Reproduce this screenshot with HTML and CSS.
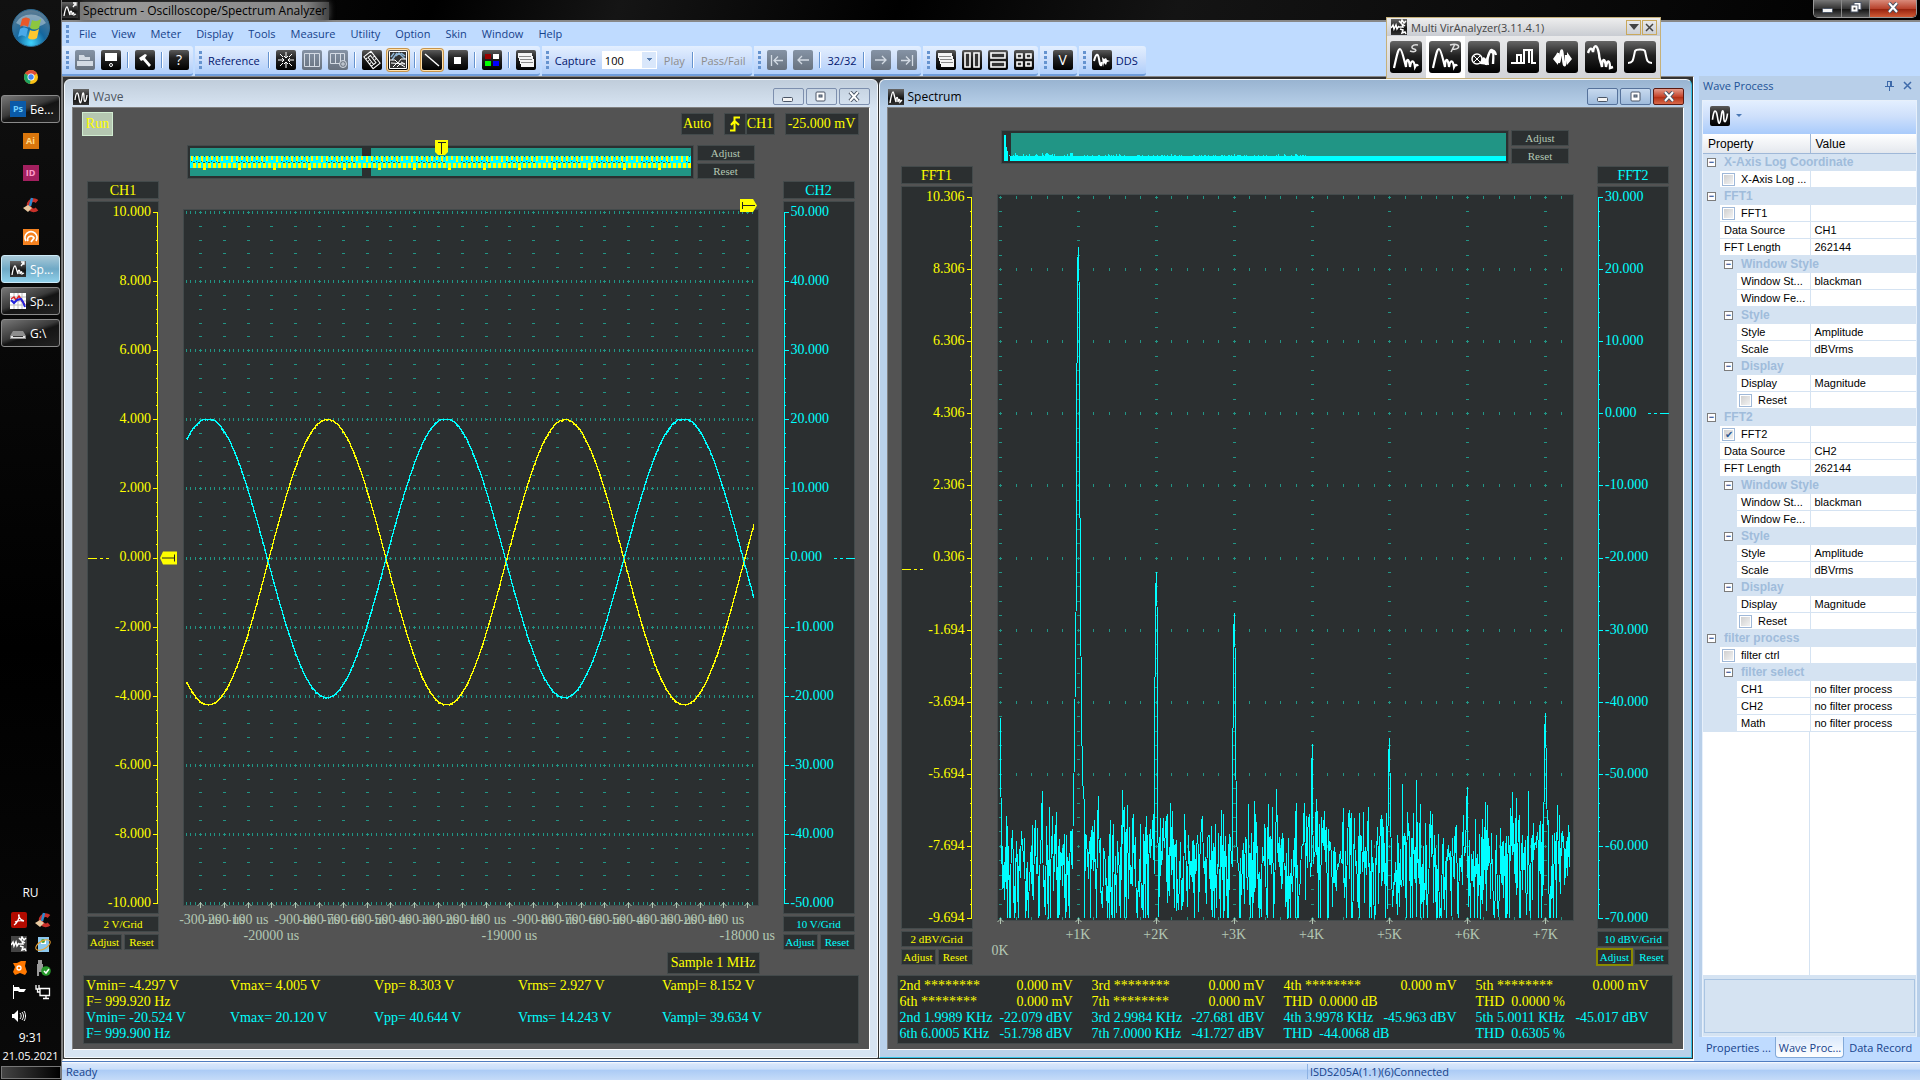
FILE: index.html
```html
<!DOCTYPE html>
<html lang="en">
<head>
    <meta charset="UTF-8">
    <title>Spectrum - Oscilloscope/Spectrum Analyzer</title>
    <link rel="stylesheet" href="styles.css">
</head>
<body>
    <!-- icon set -->
    <svg class="sprite" width="0" height="0">
        <symbol id="i-open" viewBox="0 0 20 20"><path d="M4 5h5l1 2h5v3H4z M2 11h16v5H2z" fill="currentColor"/></symbol>
        <symbol id="i-save" viewBox="0 0 20 20"><path d="M4 3h12v8H4z" fill="#fff"/><circle cx="10" cy="15" r="1.5" fill="none" stroke="#fff"/></symbol>
        <symbol id="i-hammer" viewBox="0 0 20 20"><path d="M4 8l6-4 2 1-2 3 6 7-2 2-6-7-2 1z" fill="#fff"/></symbol>
        <symbol id="i-center" viewBox="0 0 20 20"><path d="M10 2v6M8 6l2 2 2-2M10 18v-6M8 14l2-2 2 2M2 10h6M6 8l2 2-2 2M18 10h-6M14 8l-2 2 2 2M4 4l3 3M16 4l-3 3M4 16l3-3M16 16l-3-3" fill="none" stroke="#fff" stroke-width="1"/></symbol>
        <symbol id="i-cols" viewBox="0 0 20 20"><path d="M2.500 3.500h15v13h-15zM7.500 3.500v13M12.500 3.500v13" fill="none" stroke="currentColor"/></symbol>
        <symbol id="i-colsadd" viewBox="0 0 20 20"><path d="M2.500 3.500h14v10h-14zM7.500 3.500v10M12.500 3.500v10" fill="none" stroke="currentColor"/><circle cx="15" cy="14" r="3.500" fill="#77808c" stroke="currentColor"/><path d="M13 14h4M15 12v4" stroke="currentColor"/></symbol>
        <symbol id="i-ruler" viewBox="0 0 20 20"><g transform="rotate(-38 10 10)" fill="none" stroke="#fff"><path d="M5.500 2.500h9v15h-9zM8.500 5.500h3v9h-3zM5.500 5.500h2M5.500 8.500h2M5.500 11.500h2M5.500 14.500h2M12.500 8.500h2M12.500 11.500h2"/></g></symbol>
        <symbol id="i-image" viewBox="0 0 20 20"><path d="M1.500 1.500h17v17h-17z" fill="#333" stroke="#fff"/><path d="M3 7l3-4M4 10l5-7M8 6l3-3 6 6M13 3l4 3" fill="none" stroke="#8db4d4" stroke-width="1.500"/><path d="M2 10h5l3 3 3-4h5M3 13l14 1M5 17l4-4M9 17l3-3 5 3M13 12l4 2" fill="none" stroke="#fff"/></symbol>
        <symbol id="i-line" viewBox="0 0 20 20"><path d="M3 4l14 12" stroke="#fff" stroke-width="1.400"/></symbol>
        <symbol id="i-square" viewBox="0 0 20 20"><path d="M6 7h7v7H6z" fill="#fff"/></symbol>
        <symbol id="i-colors" viewBox="0 0 20 20"><path d="M3 4h6v5H3z" fill="#900"/><path d="M11 4h6v5h-6z" fill="#fff"/><path d="M3 11h6v5H3z" fill="#0f0"/><path d="M11 11h6v5h-6z" fill="#00f"/></symbol>
        <symbol id="i-stack" viewBox="0 0 20 20"><path d="M2 3h14v3h1v3h1v8H5v-3H4v-3H3V8H2z" fill="#f4f4f4"/><path d="M3 6.500h12M4 9.500h12M5 12.500h12" stroke="#888"/></symbol>
        <symbol id="i-first" viewBox="0 0 20 20"><path d="M4.500 5v11M16 10.500H7M11 6.500l-4 4 4 4" fill="none" stroke="currentColor" stroke-width="1.300"/></symbol>
        <symbol id="i-prev" viewBox="0 0 20 20"><path d="M16 10H5M9 6l-4 4 4 4" fill="none" stroke="currentColor" stroke-width="1.300"/></symbol>
        <symbol id="i-next" viewBox="0 0 20 20"><path d="M4 10h11M11 6l4 4-4 4" fill="none" stroke="currentColor" stroke-width="1.300"/></symbol>
        <symbol id="i-last" viewBox="0 0 20 20"><path d="M15.500 5v11M4 10.500h9M9 6.500l4 4-4 4" fill="none" stroke="currentColor" stroke-width="1.300"/></symbol>
        <symbol id="i-tilev" viewBox="0 0 20 20"><path d="M3 3h5v14H3zM12 3h5v14h-5z" fill="#333" stroke="#fff" stroke-width="1.600"/></symbol>
        <symbol id="i-tileh" viewBox="0 0 20 20"><path d="M3 3h14v5H3zM3 12h14v5H3z" fill="#333" stroke="#fff" stroke-width="1.600"/></symbol>
        <symbol id="i-tile4" viewBox="0 0 20 20"><path d="M3 4h5v4H3zM12 4h5v4h-5zM3 12h5v4H3zM12 12h5v4h-5z" fill="#333" stroke="#fff" stroke-width="1.600"/></symbol>
        <symbol id="i-dds" viewBox="0 0 20 20"><path d="M2 11c2-8 4-8 5-2s2 9 3 3" fill="none" stroke="#fff" stroke-width="2"/><path d="M10 7l2 2 2-1 1 2 3 1-3 1-1 3-2-2-1 4z" fill="#fff"/></symbol>
        <symbol id="i-wave" viewBox="0 0 16 16"><path d="M2 11c1-9 3-9 4-2s2 6 3-1 2-4 2 1 2 5 3-3" fill="none" stroke="#fff" stroke-width="1.300"/></symbol>
        <symbol id="i-spec" viewBox="0 0 16 16"><path d="M2 14c1-6 2-11 3-11s2 8 3 10c0-6 2-6 2 0 1-4 2-3 2 0l2-2" fill="none" stroke="#fff" stroke-width="1.400"/></symbol>
        <symbol id="i-specp" viewBox="0 0 16 16"><path d="M2 14c1-6 2-9 3-9s2 6 3 8c0-5 2-5 2 0 1-3 2-3 2 0l2-1M11 5l3-4M11 1h3v2h-2" fill="none" stroke="#fff" stroke-width="1.300"/></symbol>
        <symbol id="i-multi" viewBox="0 0 16 16"><path d="M0 9l2-3 1 4 2-4 1 4 2-3M8 2l2 2 1-3 2 3 2-2M8 8h4l-1-3 3 2M9 10l3 1-1 3 3-1 1 2" fill="none" stroke="#fff" stroke-width="1.500"/></symbol>
        <symbol id="i-an1" viewBox="0 0 32 32"><path d="M4 27C7 14 8 8 10 8s4 11 6 18c0-9 3-10 4 0 1-8 4-7 5 0 1-2 2-3 3-1" fill="none" stroke="#fff" stroke-width="2.200"/><path d="M28 4c-6-1-8 3-4 4s1 4-4 2" fill="none" stroke="#ddd" stroke-width="1.500"/></symbol>
        <symbol id="i-an2" viewBox="0 0 32 32"><path d="M4 27C7 14 8 8 10 8s4 11 6 18c0-9 3-10 4 0 1-8 4-7 5 0 1-2 2-3 3-1" fill="none" stroke="#fff" stroke-width="2.200"/><path d="M22 11l4-8M21 4c7-2 10 1 8 3s-5 1-6 1" fill="none" stroke="#ddd" stroke-width="1.500"/></symbol>
        <symbol id="i-an3" viewBox="0 0 32 32"><circle cx="9" cy="18" r="5" fill="none" stroke="#fff" stroke-width="1.500"/><path d="M6 15l6 6M12 15l-6 6" stroke="#fff"/><path d="M12 23c2-8 4-8 6-5l2-5 1 11z" fill="#fff"/><path d="M18 24c2-9 4-16 6-15s1 14 1 14M23 12c2-4 4-2 5 2" fill="none" stroke="#fff" stroke-width="2.400"/></symbol>
        <symbol id="i-an4" viewBox="0 0 32 32"><path d="M4 22h6v-8h4v8h3V9h5v13h0M17 22V9M22 9v13M22 9h3v13h4M10 22h5" fill="none" stroke="#fff" stroke-width="2"/></symbol>
        <symbol id="i-an5" viewBox="0 0 32 32"><path d="M12 12c0 8 1 13 2 5s2-12 3 0 3 8 3-3" fill="none" stroke="#fff" stroke-width="2.400"/><path d="M12 11l-5 7 5 6zM21 11l5 7-5 6z" fill="#fff"/></symbol>
        <symbol id="i-an6" viewBox="0 0 32 32"><path d="M3 12c2-6 4-5 5-1 1-7 4-9 6 2 0 5 2 8 3 13 0-9 3-10 4 0 1-8 4-7 4 1l3-1" fill="none" stroke="#fff" stroke-width="2.400"/></symbol>
        <symbol id="i-an7" viewBox="0 0 32 32"><path d="M4 22c5 0 5-2 7-12 1-2 9-2 10 0 2 10 2 12 7 12" fill="none" stroke="#fff" stroke-width="2"/></symbol>
        <symbol id="i-min" viewBox="0 0 14 11"><rect x="1.500" y="6.500" width="10" height="4" rx="1" fill="#f4f4f4" stroke="#4a5566"/></symbol>
        <symbol id="i-max" viewBox="0 0 14 11"><rect x="2" y="1" width="9" height="9" rx="1" fill="#fff" stroke="#4a5566"/><rect x="5" y="4" width="3" height="2" fill="#9ab" stroke="#4a5566"/></symbol>
        <symbol id="i-restore" viewBox="0 0 14 11"><rect x="5" y="0.500" width="7" height="7" fill="#fff" stroke="#4a5566"/><rect x="2" y="3" width="7" height="7" fill="#fff" stroke="#4a5566"/><rect x="4.500" y="5.500" width="2" height="2" fill="#333"/></symbol>
        <symbol id="i-x" viewBox="0 0 14 11"><path d="M3 1l8 9M11 1l-8 9" stroke="#4a5566" stroke-width="4"/><path d="M3 1l8 9M11 1l-8 9" stroke="#fff" stroke-width="2"/></symbol>
    </svg>

    <nav class="taskbar">
        <button class="start" aria-label="Start">
            <svg width="40" height="40" viewBox="0 0 40 40">
                <defs><radialGradient id="orb" cx="50%" cy="90%" r="85%"><stop offset="0" stop-color="#3fd4ff"/><stop offset=".45" stop-color="#14679f"/><stop offset="1" stop-color="#5a7b93"/></radialGradient></defs>
                <circle cx="20" cy="20" r="18.500" fill="url(#orb)" stroke="#2c6a92"/>
                <path d="M5 15a16 13 0 0 1 30 0c-9 6-20 6-30 0z" fill="#fff" opacity=".35"/>
                <path d="M11 11c3-2 5-2 8 0l-2 8c-3-2-5-2-8 0z" fill="#e8582a"/>
                <path d="M21 12c3 2 6 1 9-1l-2 9c-3 2-6 2-9 0z" fill="#8dc63f"/>
                <path d="M9 21c3-2 5-2 8 0l-2 8c-3-2-5-2-8 0z" fill="#4aa9e9"/>
                <path d="M19 22c3 2 6 1 9-1l-2 9c-3 2-6 2-9 0z" fill="#fdc72f"/>
            </svg>
        </button>
        <div class="tasks">
            <button class="pin" aria-label="Chrome"><svg width="16" height="16" viewBox="0 0 16 16"><circle cx="8" cy="8" r="7" fill="#fbc116"/><path d="M8 8L2 4.500A7 7 0 0 1 14 4.500z" fill="#dd4b39"/><path d="M8 8L2 4.500A7 7 0 0 0 7 15z" fill="#1da462"/><circle cx="8" cy="8" r="3.500" fill="#fff"/><circle cx="8" cy="8" r="2.700" fill="#4285f4"/></svg></button>
            <button class="task"><i class="app-ico ps">Ps</i>Бе...</button>
            <button class="pin"><i class="app-ico ai">Ai</i></button>
            <button class="pin"><i class="app-ico indd">ID</i></button>
            <button class="pin" aria-label="Cleaner"><svg width="16" height="16" viewBox="0 0 16 16"><path d="M14 4.500A5 5 0 1 0 14 12" fill="none" stroke="#c8312a" stroke-width="4"/><path d="M9 1L7 9" stroke="#2c8ad0" stroke-width="2.500"/><path d="M0 11l5-3 4 3-4 4z" fill="#e8c9a0"/></svg></button>
            <button class="pin" aria-label="Player"><svg width="16" height="16" viewBox="0 0 16 16"><path d="M0 0h16v16H0z" fill="#f58220"/><path d="M3 12a6 6 0 1 1 10 0M5 12a3 3 0 0 1 6-3l-3 4" fill="none" stroke="#fff" stroke-width="1.800"/></svg></button>
            <button class="task active"><i class="app-ico dark"><svg width="16" height="16"><use href="#i-specp"/></svg></i>Sp...</button>
            <button class="task"><i class="app-ico"><svg width="16" height="16" viewBox="0 0 16 16"><path d="M0 0h16v16H0z" fill="#fff"/><path d="M0 4h16M0 8h16M0 12h16M4 0v16M8 0v16M12 0v16" stroke="#bbb"/><path d="M1 6l3-2 2 3 3-4 3 5 3 4" fill="none" stroke="#d22" stroke-width="1.500"/><path d="M1 7l3 3 3-3 4-1 2 3 2 5" fill="none" stroke="#22d" stroke-width="2"/></svg></i>Sp...</button>
            <button class="task"><i class="app-ico"><svg width="16" height="16" viewBox="0 0 16 16"><path d="M3 6h10l3 5v3H0v-3z" fill="#8d8d8d"/><path d="M1 11h14v2H1z" fill="#ddd"/><path d="M3 11h10v1H3z" fill="#333"/></svg></i>G:\</button>
        </div>
        <div class="tray">
            <span>RU</span>
            <div class="tray-icons">
                <svg width="16" height="16" viewBox="0 0 16 16"><rect width="16" height="16" rx="2" fill="#b30b00"/><path d="M3 13c3-2 6-7 5-10-1-1 0 5 5 6M4 10c2-1 5-2 9-1" fill="none" stroke="#fff" stroke-width="1.300"/></svg>
                <svg width="16" height="16" viewBox="0 0 16 16"><path d="M14 4.500A5 5 0 1 0 14 12" fill="none" stroke="#c8312a" stroke-width="4"/><path d="M9 1L7 9" stroke="#2c8ad0" stroke-width="2.500"/><path d="M0 11l5-3 4 3-4 4z" fill="#e8c9a0"/></svg>
                <svg width="16" height="16" viewBox="0 0 16 16"><path d="M0 0h16v16H0z" fill="#444"/><use href="#i-multi"/></svg>
                <svg width="16" height="16" viewBox="0 0 16 16"><path d="M3 1h11v15H3z" fill="#8cc8ef"/><path d="M6 4h5v4H6z" fill="#fff"/><circle cx="8" cy="5" r="2" fill="#48a63a"/><ellipse cx="8" cy="9" rx="8" ry="4" fill="none" stroke="#f0a22d" transform="rotate(-30 8 9)"/></svg>
                <svg width="16" height="16" viewBox="0 0 16 16"><path d="M2 3l4 0 4-2 5 0-1 5 2 6-2 3-5-2-5 2-2-3 2-5z" fill="#ff7800"/><circle cx="8" cy="8" r="2" fill="none" stroke="#fff" stroke-width="1.300"/></svg>
                <svg width="16" height="16" viewBox="0 0 16 16"><path d="M3 0h4v4h1v8H4v4H2V4h1z" fill="#999"/><circle cx="11" cy="11" r="4.800" fill="#27992b"/><path d="M9 11l2 2 3-4" fill="none" stroke="#fff" stroke-width="1.500"/></svg>
                <svg width="16" height="16" viewBox="0 0 16 16"><path d="M2.500 1v14" stroke="#fff"/><path d="M3 3h5l1 2 6 0-2 3H8L7 7H3z" fill="#fff"/></svg>
                <svg width="16" height="16" viewBox="0 0 16 16"><path d="M5 4.500h9.500v7H5zM8 14.500h6M11 12v2M1 1v4h3V1M2.500 5v3H5" fill="none" stroke="#fff" stroke-width="1.300"/></svg>
                <svg width="16" height="16" viewBox="0 0 16 16"><path d="M1 6h2l4-4v12l-4-4H1z" fill="#fff"/><path d="M9 5c1.500 2 1.500 4 0 6M11 4c2 3 2 5 0 8M13 3c2 3 2 7 0 10" fill="none" stroke="#fff"/></svg>
            </div>
            <span class="clock">9:31</span>
            <span class="date">21.05.2021</span>
        </div>
        <button class="show-desktop" aria-label="Show desktop"></button>
    </nav>

    <div class="app">
        <header class="titlebar">
            <i class="app-ico dark"><svg width="16" height="16"><use href="#i-specp"/></svg></i>
            <span class="title-text">Spectrum - Oscilloscope/Spectrum Analyzer</span>
            <div class="caption">
                <button aria-label="Minimize"><svg width="14" height="11"><use href="#i-min"/></svg></button>
                <button aria-label="Restore"><svg width="14" height="11"><use href="#i-restore"/></svg></button>
                <button class="close" aria-label="Close"><svg width="14" height="11"><use href="#i-x"/></svg></button>
            </div>
        </header>

        <nav class="menubar">
            <span class="grip"></span>
            <a href="#">File</a><a href="#">View</a><a href="#">Meter</a><a href="#">Display</a><a href="#">Tools</a><a href="#">Measure</a><a href="#">Utility</a><a href="#">Option</a><a href="#">Skin</a><a href="#">Window</a><a href="#">Help</a>
        </nav>

        <div class="toolbars">
            <div class="bar">
                <span class="grip"></span>
                <button class="tb off" aria-label="Open"><svg><use href="#i-open"/></svg></button>
                <button class="tb" aria-label="Save"><svg><use href="#i-save"/></svg></button>
                <span class="sep"></span>
                <button class="tb" aria-label="Setup"><svg><use href="#i-hammer"/></svg></button>
                <span class="sep"></span>
                <button class="tb">?</button>
            </div>
            <div class="bar">
                <span class="grip"></span>
                <button class="txt ref">Reference</button>
                <span class="sep"></span>
                <button class="tb" aria-label="Center"><svg><use href="#i-center"/></svg></button>
                <button class="tb off" aria-label="Columns"><svg><use href="#i-cols"/></svg></button>
                <button class="tb off" aria-label="Add column"><svg><use href="#i-colsadd"/></svg></button>
                <span class="sep"></span>
                <button class="tb" aria-label="Ruler"><svg><use href="#i-ruler"/></svg></button>
                <button class="tb checked" aria-label="Persistence"><svg><use href="#i-image"/></svg></button>
                <span class="sep"></span>
                <button class="tb checked" aria-label="Line"><svg><use href="#i-line"/></svg></button>
                <button class="tb" aria-label="Dot"><svg><use href="#i-square"/></svg></button>
                <span class="sep"></span>
                <button class="tb" aria-label="Colors"><svg><use href="#i-colors"/></svg></button>
                <span class="sep"></span>
                <button class="tb" aria-label="Reports"><svg><use href="#i-stack"/></svg></button>
            </div>
            <div class="bar capture-bar">
                <span class="grip"></span>
                <label for="capture">Capture</label>
                <select id="capture"><option>100</option></select>
                <button class="txt" disabled>Play</button>
                <span class="sep"></span>
                <button class="txt" disabled>Pass/Fail</button>
            </div>
            <div class="bar">
                <span class="grip"></span>
                <button class="tb off" aria-label="First"><svg><use href="#i-first"/></svg></button>
                <button class="tb off" aria-label="Previous"><svg><use href="#i-prev"/></svg></button>
                <span class="sep"></span>
                <span class="txt">32/32</span>
                <span class="sep"></span>
                <button class="tb off" aria-label="Next"><svg><use href="#i-next"/></svg></button>
                <button class="tb off" aria-label="Last"><svg><use href="#i-last"/></svg></button>
            </div>
            <div class="bar">
                <span class="grip"></span>
                <button class="tb" aria-label="Cascade"><svg><use href="#i-stack"/></svg></button>
                <button class="tb" aria-label="Tile vertically"><svg><use href="#i-tilev"/></svg></button>
                <button class="tb" aria-label="Tile horizontally"><svg><use href="#i-tileh"/></svg></button>
                <button class="tb" aria-label="Tile"><svg><use href="#i-tile4"/></svg></button>
            </div>
            <div class="bar">
                <span class="grip"></span>
                <button class="tb">V</button>
            </div>
            <div class="bar">
                <span class="grip"></span>
                <button class="tb" aria-label="DDS generator"><svg><use href="#i-dds"/></svg></button>
                <span class="txt dds">DDS</span>
            </div>
        </div>

        <main class="work">
            <div class="mdi">
                <section class="win">
                    <div class="win-title">
                        <i class="app-ico dark"><svg width="16" height="16"><use href="#i-wave"/></svg></i>
                        <span>Wave</span>
                        <div class="win-btns">
                            <button aria-label="Minimize"><svg width="14" height="11"><use href="#i-min"/></svg></button>
                            <button aria-label="Maximize"><svg width="14" height="11"><use href="#i-max"/></svg></button>
                            <button aria-label="Close"><svg width="14" height="11"><use href="#i-x"/></svg></button>
                        </div>
                    </div>
                    <div class="scope">
                        <div class="topline">
                            <button class="run">Run</button>
                            <span class="box push">Auto</span>
                            <span class="box edge"><svg width="12" height="16" viewBox="0 0 12 16"><path d="M1 14.500h4.500V1.500H11M2 9l3.500-4L10 9" fill="none" stroke="#ff0" stroke-width="2"/></svg></span>
                            <span class="box src">CH1</span>
                            <span class="box level">-25.000 mV</span>
                        </div>
                        <div class="overview">
                            <svg id="waveOverview"></svg>
                            <div class="stack"><button class="box">Adjust</button><button class="box">Reset</button></div>
                        </div>
                        <div class="panels">
                            <div class="axis left yellow">
                                <div class="box head">CH1</div>
                                <div class="box scale" data-from="10" data-step="-2"></div>
                                <div class="box unit">2 V/Grid</div>
                                <div class="pair"><button class="box">Adjust</button><button class="box">Reset</button></div>
                            </div>
                            <div class="plot"><svg id="wavePlot"></svg></div>
                            <div class="axis right cyan">
                                <div class="box head">CH2</div>
                                <div class="box scale" data-from="50" data-step="-10"></div>
                                <div class="box unit">10 V/Grid</div>
                                <div class="pair"><button class="box">Adjust</button><button class="box">Reset</button></div>
                            </div>
                        </div>
                        <div class="box sample">Sample 1 MHz</div>
                        <div class="box measures wave-measures">
                            <div class="yellow"><span>Vmin= -4.297 V</span><span>Vmax= 4.005 V</span><span>Vpp= 8.303 V</span><span>Vrms= 2.927 V</span><span>Vampl= 8.152 V</span><span>F= 999.920 Hz</span></div>
                            <div class="cyan"><span>Vmin= -20.524 V</span><span>Vmax= 20.120 V</span><span>Vpp= 40.644 V</span><span>Vrms= 14.243 V</span><span>Vampl= 39.634 V</span><span>F= 999.900 Hz</span></div>
                        </div>
                    </div>
                </section>

                <section class="win front">
                    <div class="win-title">
                        <i class="app-ico dark"><svg width="16" height="16"><use href="#i-spec"/></svg></i>
                        <span>Spectrum</span>
                        <div class="win-btns">
                            <button aria-label="Minimize"><svg width="14" height="11"><use href="#i-min"/></svg></button>
                            <button aria-label="Maximize"><svg width="14" height="11"><use href="#i-max"/></svg></button>
                            <button class="close" aria-label="Close"><svg width="14" height="11"><use href="#i-x"/></svg></button>
                        </div>
                    </div>
                    <div class="scope spectrum">
                        <div class="overview">
                            <svg id="specOverview"></svg>
                            <div class="stack"><button class="box">Adjust</button><button class="box">Reset</button></div>
                        </div>
                        <div class="panels">
                            <div class="axis left yellow">
                                <div class="box head">FFT1</div>
                                <div class="box scale" data-from="10.306" data-step="-2"></div>
                                <div class="box unit">2 dBV/Grid</div>
                                <div class="pair"><button class="box">Adjust</button><button class="box">Reset</button></div>
                            </div>
                            <div class="plot"><svg id="specPlot"></svg></div>
                            <div class="axis right cyan">
                                <div class="box head">FFT2</div>
                                <div class="box scale" data-from="30" data-step="-10"></div>
                                <div class="box unit">10 dBV/Grid</div>
                                <div class="pair"><button class="box focus">Adjust</button><button class="box">Reset</button></div>
                            </div>
                        </div>
                        <div class="box measures spec-measures">
                            <div class="yellow">
                                <span>2nd ********</span><span>0.000 mV</span><span>3rd ********</span><span>0.000 mV</span><span>4th ********</span><span>0.000 mV</span><span>5th ********</span><span>0.000 mV</span>
                                <span>6th ********</span><span>0.000 mV</span><span>7th ********</span><span>0.000 mV</span><span class="thd">THD&nbsp; 0.0000 dB</span><span class="thd">THD&nbsp; 0.0000 %</span>
                            </div>
                            <div class="cyan">
                                <span>2nd 1.9989 KHz</span><span>-22.079 dBV</span><span>3rd 2.9984 KHz</span><span>-27.681 dBV</span><span>4th 3.9978 KHz</span><span>-45.963 dBV</span><span>5th 5.0011 KHz</span><span>-45.017 dBV</span>
                                <span>6th 6.0005 KHz</span><span>-51.798 dBV</span><span>7th 7.0000 KHz</span><span>-41.727 dBV</span><span class="thd">THD&nbsp; -44.0068 dB</span><span class="thd">THD&nbsp; 0.6305 %</span>
                            </div>
                        </div>
                    </div>
                </section>
            </div>

            <aside class="dock">
                <div class="dock-title">
                    <span>Wave Process</span>
                    <button aria-label="Pin"><svg width="9" height="11" viewBox="0 0 9 11"><path d="M2.500 1v5M6.500 1v5M2 1.500h5M5.500 2v4M0 6.500h9M4.500 7v4" fill="none" stroke="#3e6aaa"/></svg></button>
                    <button aria-label="Close"><svg width="9" height="9" viewBox="0 0 9 9"><path d="M1 1l7 7M8 1l-7 7" stroke="#3e6aaa" stroke-width="1.500"/></svg></button>
                </div>
                <div class="dock-body">
                    <div class="dock-tools"><button class="tb" aria-label="Wave"><svg viewBox="0 0 16 16"><use href="#i-wave"/></svg></button><span class="drop"></span></div>
                    <table class="props">
                        <thead><tr><th>Property</th><th>Value</th></tr></thead>
                        <tbody>
                            <tr class="cat"><td colspan="2"><button>−</button>X-Axis Log Coordinate</td></tr>
                            <tr><td><label><input type="checkbox">X-Axis Log ...</label></td><td></td></tr>
                            <tr class="cat"><td colspan="2"><button>−</button>FFT1</td></tr>
                            <tr><td><label><input type="checkbox">FFT1</label></td><td></td></tr>
                            <tr><td>Data Source</td><td>CH1</td></tr>
                            <tr><td>FFT Length</td><td>262144</td></tr>
                            <tr class="cat sub"><td colspan="2"><button>−</button>Window Style</td></tr>
                            <tr class="sub"><td>Window St...</td><td>blackman</td></tr>
                            <tr class="sub"><td>Window Fe...</td><td></td></tr>
                            <tr class="cat sub"><td colspan="2"><button>−</button>Style</td></tr>
                            <tr class="sub"><td>Style</td><td>Amplitude</td></tr>
                            <tr class="sub"><td>Scale</td><td>dBVrms</td></tr>
                            <tr class="cat sub"><td colspan="2"><button>−</button>Display</td></tr>
                            <tr class="sub"><td>Display</td><td>Magnitude</td></tr>
                            <tr class="sub"><td><label><input type="checkbox">Reset</label></td><td></td></tr>
                            <tr class="cat"><td colspan="2"><button>−</button>FFT2</td></tr>
                            <tr><td><label><input type="checkbox" checked>FFT2</label></td><td></td></tr>
                            <tr><td>Data Source</td><td>CH2</td></tr>
                            <tr><td>FFT Length</td><td>262144</td></tr>
                            <tr class="cat sub"><td colspan="2"><button>−</button>Window Style</td></tr>
                            <tr class="sub"><td>Window St...</td><td>blackman</td></tr>
                            <tr class="sub"><td>Window Fe...</td><td></td></tr>
                            <tr class="cat sub"><td colspan="2"><button>−</button>Style</td></tr>
                            <tr class="sub"><td>Style</td><td>Amplitude</td></tr>
                            <tr class="sub"><td>Scale</td><td>dBVrms</td></tr>
                            <tr class="cat sub"><td colspan="2"><button>−</button>Display</td></tr>
                            <tr class="sub"><td>Display</td><td>Magnitude</td></tr>
                            <tr class="sub"><td><label><input type="checkbox">Reset</label></td><td></td></tr>
                            <tr class="cat"><td colspan="2"><button>−</button>filter process</td></tr>
                            <tr><td><label><input type="checkbox">filter ctrl</label></td><td></td></tr>
                            <tr class="cat sub"><td colspan="2"><button>−</button>filter select</td></tr>
                            <tr class="sub"><td>CH1</td><td>no filter process</td></tr>
                            <tr class="sub"><td>CH2</td><td>no filter process</td></tr>
                            <tr class="sub"><td>Math</td><td>no filter process</td></tr>
                        </tbody>
                    </table>
                    <div class="props-fill"></div>
                    <div class="props-help"></div>
                </div>
                <div class="dock-tabs">
                    <button>Properties ...</button>
                    <button class="current">Wave Proc...</button>
                    <button>Data Record</button>
                </div>
            </aside>
        </main>

        <footer class="status">
            <span class="ready">Ready</span>
            <span class="device">ISDS205A(1.1)(6)Connected</span>
        </footer>
    </div>

    <!-- floating launcher -->
    <div class="launcher">
        <div class="launcher-title">
            <i class="app-ico dark"><svg width="16" height="16"><use href="#i-multi"/></svg></i>
            <span>Multi VirAnalyzer(3.11.4.1)</span>
            <button aria-label="Options"><svg width="10" height="6" viewBox="0 0 10 6"><path d="M0 0h10L5 6z" fill="#444"/></svg></button>
            <button aria-label="Close"><svg width="9" height="9" viewBox="0 0 9 9"><path d="M1 1l7 7M8 1l-7 7" stroke="#444" stroke-width="1.500"/></svg></button>
        </div>
        <div class="launcher-icons">
            <button aria-label="Spectrum S"><svg><use href="#i-an1"/></svg></button>
            <button class="on" aria-label="Spectrum P"><svg><use href="#i-an2"/></svg></button>
            <button aria-label="Multimeter"><svg><use href="#i-an3"/></svg></button>
            <button aria-label="Logic"><svg><use href="#i-an4"/></svg></button>
            <button aria-label="Burst"><svg><use href="#i-an5"/></svg></button>
            <button aria-label="Noise"><svg><use href="#i-an6"/></svg></button>
            <button aria-label="Filter"><svg><use href="#i-an7"/></svg></button>
        </div>
    </div>

    <script src="script.js"></script>
</body>
</html>
```

FILE: styles.css
```css
* {
    box-sizing: border-box;
}
body {
    margin: 0;
    height: 100vh;
    display: flex;
    overflow: hidden;
    background-color: #bfdbff;
    font-family: "Open Sans", "Noto Sans", sans-serif;
    font-size: 11px;
    color: #15428b;
}
button {
    font: inherit;
    color: inherit;
    padding: 0;
    margin: 0;
    border: none;
    background: none;
}
.sprite {
    position: absolute;
}

/* taskbar */
.taskbar {
    width: 62px;
    flex: none;
    display: flex;
    flex-direction: column;
    background: linear-gradient(to bottom, #111, #000 60%, #0a0a0a);
    border-right: 1px solid #777;
    color: #fff;
    font-size: 12px;
}
.start {
    height: 40px;
    margin: 8px 0 15px;
}
.tasks {
    display: flex;
    flex-direction: column;
    gap: 4px;
    padding: 0 1px;
}
.pin {
    height: 28px;
    display: flex;
    align-items: center;
    justify-content: center;
}
.task {
    height: 28px;
    display: flex;
    align-items: center;
    gap: 4px;
    padding-left: 8px;
    border: 1px solid #8a8a8a;
    border-radius: 3px;
    background: linear-gradient(160deg, #777 0%, #3a3a3a 45%, #141414 55%, #222 100%);
}
.task.active {
    border-color: #cdeaf8;
    background: linear-gradient(to bottom, #a9c9d8, #6fa9c6 50%, #8fd0ea);
}
.app-ico {
    width: 16px;
    height: 16px;
    flex: none;
    display: flex;
    align-items: center;
    justify-content: center;
    font-style: normal;
    font-weight: bold;
    font-size: 9px;
    line-height: 16px;
}
.dark {
    background: linear-gradient(to bottom, #666, #111 60%, #333);
}
.ps {
    background-color: #0a5aa8;
    color: #6fd0ff;
}
.ai {
    background-color: #d9760c;
    color: #ffd98a;
}
.indd {
    background-color: #a3205f;
    color: #ff9ccc;
}
.tray {
    margin-top: auto;
    display: flex;
    flex-direction: column;
    align-items: center;
    line-height: 16px;
}
.tray-icons {
    display: grid;
    grid-template-columns: 16px 16px;
    gap: 8px;
    padding: 11px 0 6px;
}
.clock {
    padding-bottom: 2px;
}
.date {
    font-size: 11px;
}
.show-desktop {
    height: 13px;
    margin: 2px 0 1px 1px;
    border: 1px solid #777;
    background: linear-gradient(to right, #444, #000);
}

/* main window */
.app {
    flex: 1;
    min-width: 0;
    display: flex;
    flex-direction: column;
}
.titlebar {
    height: 22px;
    flex: none;
    display: flex;
    align-items: flex-start;
    gap: 2px;
    padding-top: 2px;
    background: linear-gradient(110deg, #111, #000 20%, #151515 30%, #000 45%, #141414 60%, #000);
    border-bottom: 2px solid #888;
    color: #000;
}
.title-text {
    line-height: 18px;
    font-size: 12px;
    padding: 0 2px 0 3px;
    background: linear-gradient(to right, #777, #999 15%, #888 90%, #444);
    box-shadow: 0 0 6px #555;
}
.caption {
    display: flex;
    margin: -2px 3px 0 auto;
    border: 1px solid #999;
    border-top: none;
    border-radius: 0 0 5px 5px;
    overflow: hidden;
}
.caption button {
    width: 28px;
    height: 17px;
    background: linear-gradient(to bottom, #777, #333 50%, #111 52%, #555);
    border-right: 1px solid #888;
}
.caption .close {
    width: 46px;
    border-right: none;
    background: linear-gradient(to bottom, #d98a7a, #b8432d 50%, #93200c 52%, #d05a35);
}
.menubar {
    height: 24px;
    flex: none;
    display: flex;
    align-items: center;
    padding: 0 0 1px 4px;
    background-color: #bfdbff;
}
.menubar .grip {
    margin-right: 3px;
}
.menubar a {
    padding: 0 8px 0 7px;
    color: #15428b;
    text-decoration: none;
}
.grip {
    width: 3px;
    height: 18px;
    background: repeating-linear-gradient(to bottom, #6593cf 0 3px, transparent 3px 5px);
}
.toolbars {
    height: 30px;
    flex: none;
    display: flex;
    gap: 2px;
    color: #00156e;
}
.bar {
    display: flex;
    align-items: center;
    gap: 6px;
    padding: 0 4px;
    background: linear-gradient(to bottom, #e3efff, #cfe0fb 45%, #b0cffb);
    border-bottom: 2px solid #6f9ddb;
    border-radius: 0 3px 3px 0;
}
.ref {
    padding-right: 2px;
}
.capture-bar {
    padding-right: 6px;
}
.capture-bar .txt {
    padding: 0 1px;
}
.dds {
    padding-right: 4px;
    margin-left: -2px;
}
.txt:disabled {
    color: #8d8d8d;
}
.sep {
    width: 2px;
    height: 16px;
    background-color: #6593cf;
    border-right: 1px solid #fff;
}
.tb {
    width: 20px;
    height: 20px;
    flex: none;
    border-radius: 2px;
    background: linear-gradient(to bottom, #5a5a5a, #222 40%, #000);
    color: #fff;
    font-size: 14px;
    line-height: 20px;
    text-align: center;
}
.tb svg {
    display: block;
    width: 20px;
    height: 20px;
}
.tb.off {
    background: linear-gradient(to bottom, #8593a5, #68727f);
    color: #d3dae3;
}
.tb.checked {
    box-shadow: 0 0 0 1px #ffe1ad, 0 0 0 2px #c8954a;
}
#capture {
    width: 55px;
    height: 18px;
    border: none;
    padding: 0 3px;
    appearance: none;
    font: inherit;
    color: #000;
    background-color: #fff;
    background-image: linear-gradient(#5a7fb0, #5a7fb0), linear-gradient(#5a7fb0, #5a7fb0), linear-gradient(#5a7fb0, #5a7fb0), linear-gradient(#d9e7fb, #d9e7fb);
    background-size: 5px 1px, 3px 1px, 1px 1px, 14px 16px;
    background-position: right 5px top 7px, right 6px top 8px, right 7px top 9px, right 1px top 1px;
    background-repeat: no-repeat;
}

/* mdi area */
.work {
    flex: 1;
    min-height: 0;
    display: flex;
    gap: 5px;
    background-color: #bfdbff;
}
.mdi {
    flex: 1;
    min-width: 0;
    display: grid;
    grid-template-columns: 1fr 1fr;
    gap: 1px;
    padding: 2px 1px 1px;
    background-color: #333;
    border: 1px solid #888;
    border-right-color: #fff;
    border-bottom: 2px solid #fff;
}
.win {
    min-width: 0;
    min-height: 0;
    display: flex;
    flex-direction: column;
    padding: 0 7px 7px;
    border: 1px solid #f4f8fc;
    border-radius: 6px 6px 0 0;
    background: linear-gradient(to bottom, #c0cddb, #d7e4f2 28px);
    color: #4d5560;
    font-size: 12px;
}
.win.front {
    background: linear-gradient(to bottom, #99b4d1, #b9d1ea 28px);
    border-right-color: #33c4e8;
    border-bottom-color: #33c4e8;
    color: #000;
}
.win-title {
    height: 27px;
    flex: none;
    display: flex;
    align-items: center;
    gap: 4px;
    padding-top: 6px;
    padding-left: 1px;
}
.win-btns {
    display: flex;
    gap: 2px;
    margin-left: auto;
}
.win-btns button {
    width: 31px;
    height: 17px;
    display: flex;
    align-items: center;
    justify-content: center;
    border: 1px solid #7d8fae;
    border-radius: 2px;
}
.front .win-btns button {
    background: linear-gradient(to bottom, #c7d9ee, #9fbbdc);
    border-color: #56729b;
}
.front .win-btns .close {
    background: linear-gradient(to bottom, #e49b8b, #c5442c 50%, #b02c12 52%, #d9694a);
    border-color: #5b1a12;
}
.scope {
    flex: 1;
    min-height: 0;
    display: flex;
    flex-direction: column;
    padding: 4px 10px 5px;
    border: 1px solid;
    border-color: #808080 #fff #fff #808080;
    background-color: #535353;
    font-family: "Liberation Serif", serif;
    font-size: 14px;
    line-height: 16px;
}
.scope.spectrum {
    padding: 22px 10px 5px 9px;
}
.yellow {
    color: #ff0;
}
.cyan {
    color: #0ff;
}
.box {
    border: 1px solid #434a4b;
    background-color: #2b2f30;
    white-space: nowrap;
}
.topline {
    height: 24px;
    flex: none;
    display: flex;
    align-items: center;
    color: #ff0;
}
.topline .box {
    height: 22px;
    line-height: 20px;
    text-align: center;
}
.run {
    width: 31px;
    height: 24px;
    margin-left: -1px;
    border: 1px solid #d0ecd0;
    background-color: #b5c7b1;
}
.push {
    width: 33px;
    margin: 0 10px 0 auto;
}
.edge {
    width: 22px;
    display: flex;
    align-items: center;
    justify-content: center;
}
.src {
    width: 29px;
}
.level {
    width: 74px;
    margin-left: 10px;
}
.overview {
    height: 34px;
    flex: none;
    display: flex;
    gap: 3px;
    margin: 9px 104px 2px;
}
.spectrum .overview {
    margin-top: 0;
}
.overview svg {
    flex: 1;
    min-width: 0;
    height: 34px;
    overflow: visible;
}
.stack {
    width: 58px;
    display: flex;
    flex-direction: column;
    gap: 2px;
    color: #b4c8b4;
}
.stack .box,
.pair .box,
.unit {
    height: 16px;
    font-size: 11px;
    line-height: 14px;
    text-align: center;
}
.panels {
    flex: 1;
    min-height: 0;
    display: grid;
    grid-template-columns: 72px 1fr 72px;
    gap: 24px;
    padding: 0 4px;
}
.axis {
    min-height: 0;
    display: flex;
    flex-direction: column;
    gap: 2px;
}
.head {
    height: 18px;
    line-height: 18px;
    text-align: center;
}
.scale {
    position: relative;
    flex: 1;
    min-height: 0;
    display: flex;
    flex-direction: column;
    justify-content: space-between;
    padding: 2px 7px;
}
.left .scale {
    text-align: right;
}
.scale svg {
    position: absolute;
    top: -1px;
    left: -1px;
}
.pair {
    display: grid;
    grid-template-columns: 1fr 1fr;
    gap: 2px;
}
.focus {
    border-color: #8a8a00;
    outline: 1px solid #8a8a00;
}
.plot {
    position: relative;
    min-width: 0;
}
.plot svg {
    position: absolute;
    top: 0;
    left: 0;
    overflow: visible;
}
.plot text {
    fill: #b4c8b4;
    text-anchor: middle;
}
.sample {
    align-self: flex-end;
    height: 22px;
    line-height: 20px;
    padding: 0 3px;
    margin: 2px 99px 1px 0;
    color: #ff0;
}
.measures {
    height: 69px;
    flex: none;
    padding: 2px;
}
.spectrum .measures {
    margin-top: 10px;
}
.measures > div {
    display: grid;
}
.wave-measures > div {
    grid-template-columns: repeat(5, 144px);
}
.spec-measures > div {
    grid-template-columns: repeat(4, 94px 98px);
}
.spec-measures span:nth-child(even) {
    text-align: right;
    padding-right: 19px;
}
.spec-measures .thd,
.spec-measures .thd:nth-child(even) {
    grid-column: span 2;
    text-align: left;
    padding-right: 0;
}

/* docked property pane */
.dock {
    width: 221px;
    flex: none;
    display: flex;
    flex-direction: column;
    background-color: #b8cfe9;
}
.dock-title {
    height: 19px;
    flex: none;
    display: flex;
    align-items: center;
    gap: 9px;
    padding: 0 8px 0 4px;
    color: #1e5397;
}
.dock-title span {
    flex: 1;
}
.dock-title svg {
    display: block;
}
.dock-body {
    flex: 1;
    min-height: 0;
    display: flex;
    flex-direction: column;
    margin: 5px 3px 0 3px;
    border: 1px solid #e7f0fb;
    background-color: #d5e3f2;
}
.dock-tools {
    height: 33px;
    flex: none;
    display: flex;
    align-items: center;
    gap: 6px;
    padding: 0 0 4px 7px;
    background: linear-gradient(to bottom, #e3efff, #cfe0fb 45%, #a9cbfb);
}
.drop {
    border: 3px solid transparent;
    border-top-color: #4a78b5;
    border-bottom: none;
}
.props {
    width: 100%;
    table-layout: fixed;
    border-spacing: 0;
    font-family: "Liberation Sans", sans-serif;
    color: #000;
    line-height: 16px;
}
.props th {
    height: 20px;
    padding: 0 0 0 5px;
    text-align: left;
    font-weight: normal;
    font-size: 12px;
    background: linear-gradient(to bottom, #fff, #e4e8ee);
    border-bottom: 1px solid #9fb8d8;
}
.props th + th {
    border-left: 1px solid #9fb8d8;
}
.props td {
    height: 17px;
    padding: 0 0 0 4px;
    background-color: #fff;
    border-bottom: 1px solid #d5e3f2;
    border-left: 1px solid #d5e3f2;
    white-space: nowrap;
    overflow: hidden;
}
.props td:first-child {
    border-left-width: 17px;
}
.props .sub td:first-child {
    border-left-width: 34px;
}
.props .cat td:first-child {
    padding-left: 4px;
    border-left-width: 0;
    background-color: #d5e3f2;
    color: #a0bcdb;
    font-weight: bold;
    font-size: 12px;
}
.props .cat.sub td:first-child {
    padding-left: 21px;
}
.props .cat button {
    width: 9px;
    height: 9px;
    margin-right: 8px;
    border: 1px solid #7c7c7c;
    background-color: #fff;
    color: #15428b;
    font-size: 9px;
    line-height: 6px;
    vertical-align: 1px;
}
.props label {
    display: flex;
    align-items: center;
    gap: 6px;
    height: 16px;
    margin-left: -2px;
}
.props input {
    width: 13px;
    height: 13px;
    margin: 0;
    appearance: none;
    border: 1px solid #9fb8d8;
    background: linear-gradient(135deg, #ccc, #f6f6f6);
    box-shadow: inset 0 0 0 1px #fff;
}
.props input:checked::before {
    content: "✔";
    display: block;
    font-size: 10px;
    line-height: 11px;
    text-align: center;
    color: #2d5a93;
}
.props-fill {
    flex: 1;
    background: linear-gradient(to right, #fff 50%, #d5e3f2 50%, #d5e3f2 calc(50% + 1px), #fff calc(50% + 1px));
}
.props-help {
    height: 54px;
    flex: none;
    margin: 4px 1px 3px;
    border: 1px solid #a9c4e2;
}
.dock-tabs {
    height: 24px;
    flex: none;
    display: flex;
    align-items: flex-start;
    gap: 2px;
    padding-left: 4px;
    background-color: #bfdbff;
    white-space: nowrap;
}
.dock-tabs button {
    height: 21px;
    padding: 0 2px 0 3px;
}
.dock-tabs .current {
    border: 1px solid #83a9d8;
    border-top: none;
    border-radius: 0 0 4px 4px;
    background: linear-gradient(to bottom, #dbe9fb, #fff);
}

.status {
    height: 19px;
    flex: none;
    display: flex;
    align-items: center;
    padding-left: 4px;
    border-top: 1px solid #4f7cc0;
    background: linear-gradient(to bottom, #fff, #d7e6fb 10%, #c9defa 40%, #abcbf5 45%, #c5dbf8);
}
.ready {
    flex: 1;
}
.device {
    width: 613px;
    padding-left: 2px;
    border-left: 1px solid #8db2e3;
}

/* floating launcher window */
.launcher {
    position: absolute;
    top: 17px;
    right: 259px;
    width: 275px;
    height: 62px;
    border: 1px solid #c5b07a;
    background: linear-gradient(to bottom, #f2f2f2, #d2d4d8);
}
.launcher-title {
    height: 18px;
    display: flex;
    align-items: center;
    gap: 1px;
    padding: 0 3px 0 4px;
    background: linear-gradient(to bottom, #eee, #c9ccd2);
    color: #444;
}
.launcher-title span {
    flex: 1;
    padding-left: 3px;
}
.launcher-title button {
    width: 15px;
    height: 15px;
    display: flex;
    align-items: center;
    justify-content: center;
    border: 1px solid #c9a85c;
}
.launcher-icons {
    display: flex;
}
.launcher-icons button {
    width: 39px;
    height: 42px;
    padding: 5px 3px;
}
.launcher-icons .on {
    background-color: #fff;
}
.launcher-icons svg {
    display: block;
    width: 32px;
    height: 32px;
    border-radius: 3px;
    background: linear-gradient(to bottom, #666, #222 45%, #000);
}
```

FILE: script.js
```js
const TEAL = '#219585';
const PANEL = '#2b2f30';
const LABEL = '#b4c8b4';

// small repeatable generator so the noise floor is stable between redraws
let seed = 7;
function rnd() {
    seed = (seed * 16807) % 2147483647;
    return seed / 2147483647;
}

function size(svg, w, h) {
    svg.setAttribute('width', w);
    svg.setAttribute('height', h);
}

// one horizontal or vertical tick, as a path fragment
function hLine(x, y, len) {
    return `M${Math.round(x)} ${Math.round(y) + 0.5}h${len}`;
}
function vLine(x, y, len) {
    return `M${Math.round(x) + 0.5} ${Math.round(y)}v${len}`;
}

function stroke(d, color) {
    return `<path d="${d}" fill="none" stroke="${color}" shape-rendering="crispEdges"/>`;
}

function drawScale(box) {
    const right = box.closest('.axis').classList.contains('right');
    const from = parseFloat(box.dataset.from);
    const step = parseFloat(box.dataset.step);
    let html = '';
    for (let i = 0; i <= 10; i++) {
        html += `<span>${(from + step * i).toFixed(3)}</span>`;
    }
    box.innerHTML = html;

    const w = 72;
    const h = box.offsetHeight;
    const top = 11;
    const len = h - 22;
    const x = right ? 1 : w - 2;
    let d = vLine(x, top, len);
    for (let i = 0; i <= 50; i++) {
        const y = top + len * i / 50;
        const major = i % 5 === 0;
        const tick = major ? 5 : 2;
        d += hLine(right ? x : x - tick + 1, y, tick);
    }
    // zero level marker
    const zero = top + len * from / (-step * 10);
    d += right ? hLine(w - 9, zero, 9) + hLine(w - 15, zero, 3) + hLine(w - 21, zero, 3)
               : hLine(1, zero, 9) + hLine(13, zero, 3) + hLine(19, zero, 3);
    box.insertAdjacentHTML('beforeend', `<svg width="${w}" height="${h}">${stroke(d, right ? '#0ff' : '#ff0')}</svg>`);
}

function drawGrid(w, top, bottom, x0, pitch, first) {
    let d = '';
    for (let r = 0; r <= 50; r++) {
        const y = top + (bottom - top) * r / 50;
        for (let x = x0; x < w - 2; x += pitch) {
            d += hLine(x - 1, y, 3);
        }
        if (r % 5 === 0) {
            for (let x = first; x < w - 3; x += pitch / 5) {
                d += vLine(x, y - 1, 3);
            }
        }
    }
    return stroke(d, TEAL);
}

function arrow(x, y) {
    x = Math.round(x) + 0.5;
    return `M${x} ${y}v6M${x - 3} ${y + 4}l3 -3l3 3`;
}

function frame(w, top, bottom) {
    return `<rect x=".5" y="${top + 0.5}" width="${w - 1}" height="${bottom - top - 1}" fill="${PANEL}" stroke="#434a4b"/>`;
}

function drawWave() {
    const svg = document.getElementById('wavePlot');
    const w = svg.parentNode.clientWidth;
    const h = svg.parentNode.clientHeight;
    size(svg, w, h);
    const top = 31, bottom = h - 47;
    const pitch = (w - 5) / 24;
    const x0 = 17;
    const mid = (top + bottom) / 2;
    const unit = (bottom - top) / 20;
    let out = frame(w, 28, h - 44) + drawGrid(w, top, bottom, x0, pitch, x0 - pitch * 0.6);

    // each column covers a short vertical run, like a sampled trace
    let yellow = '', cyan = '';
    let lastY = null, lastC = null;
    seed = 11;
    for (let x = 3; x < w - 5; x++) {
        const ph = (x - 143.5) / (pitch * 10) * Math.PI * 2;
        const yv = Math.min(4, -0.12 + 4.13 * Math.cos(ph));
        const cv = Math.min(4, -4.04 * Math.cos(ph + 0.02));
        const y = Math.round(mid - yv * unit);
        const c = Math.round(mid - cv * unit);
        if (lastY === null) {
            lastY = y;
            lastC = c;
        }
        const y1 = Math.min(y, lastY), y2 = Math.max(y, lastY) + 1 + (rnd() < 0.3 ? 1 : 0);
        const c1 = Math.min(c, lastC), c2 = Math.max(c, lastC) + 1 + (rnd() < 0.3 ? 1 : 0);
        yellow += `M${x + 0.5} ${y1}V${y2}`;
        cyan += `M${x + 0.5} ${c1}V${c2}`;
        lastY = y;
        lastC = c;
    }
    out += stroke(yellow, '#ff0') + stroke(cyan, '#0ff');

    let marks = '';
    for (let k = 0; k < 24; k++) {
        const x = x0 + k * pitch;
        const us = -20300 + k * 100;
        marks += arrow(x, bottom - 1);
        if (us % 1000 === 0) {
            out += `<text x="${x}" y="${bottom + 37}">${us} us</text>`;
        } else {
            out += `<text x="${x}" y="${bottom + 21}">${us % 1000} us</text>`;
        }
    }
    out += `<path d="${marks}" fill="none" stroke="${LABEL}"/>`;

    // trigger and ground handles
    out += `<path d="M${w - 19} 18h13l4 6.500l-4 6.500h-13z" fill="#ff0"/><path d="M${w - 16.5} 21v7M${w - 16} 24.500h12" stroke="#222"/>`;
    out += `<path d="M-6 ${mid - 6}h-14l-3 6.500l3 6.500h14z" fill="#ff0"/><path d="M-8.500 ${mid - 3}v7M-9 ${mid + 0.5}h-12" stroke="#222"/>`;
    svg.innerHTML = out;
}

function drawWaveOverview() {
    const svg = document.getElementById('waveOverview');
    const w = svg.clientWidth;
    const gap = Math.round(w * 0.345);
    let out = `<rect x=".5" y=".5" width="${w - 1}" height="33" fill="${PANEL}" stroke="#434a4b"/>`;
    out += `<path d="M3 3h${gap - 3}v28H3zM${gap + 9} 3h${w - gap - 12}v28H${gap + 9}z" fill="${TEAL}"/>`;
    out += `<path d="M3 11h${w - 6}v12H3z" fill="#0ff"/>`;
    let a = '', b = '';
    for (let x = 4; x < w - 4; x += 5) {
        a += `M${x} 11h2v${4 + x % 3}h-2z M${x + 2} 18h3v${5 + (x % 7 === 0 ? 2 : 0)}h-3z`;
        if (x % 45 < 30) {
            b += `M${x} 16h1v1h-1z M${x + 2} 17h2v1h-2z M${x + 3} 11h1v1h-1z`;
        }
    }
    out += `<path d="${a}" fill="#ff0" shape-rendering="crispEdges"/><path d="${b}" fill="#12685d" shape-rendering="crispEdges"/>`;
    const t = Math.round(w * 0.5) + 1;
    out += `<path d="M${t - 7} -5h13v12l-3 3h-7l-3 -3z" fill="#ff0"/><path d="M${t - 4} -2.500h8M${t - 0.5} -2v11" stroke="#222"/>`;
    svg.innerHTML = out;
}

// harmonic number, height of the peak as a share of the plot, width
const PEAKS = [[0, 0.723, 0.6], [1, 0.069, 1], [2, 0.52, 1], [3, 0.577, 1], [4, 0.758, 0.8], [5, 0.75, 1], [6, 0.818, 0.8], [7, 0.716, 1]];

// drop below a peak, in pixels, at a distance d from its centre
function skirt(d) {
    const table = [0, 45, 345, 430, 520, 545, 700];
    const i = Math.min(Math.floor(d), 5);
    return table[i] + (table[i + 1] - table[i]) * (d - i);
}

function drawSpectrum() {
    const svg = document.getElementById('specPlot');
    const w = svg.parentNode.clientWidth;
    const h = svg.parentNode.clientHeight;
    size(svg, w, h);
    const top = 31, bottom = h - 47;
    const pitch = w * 0.135;
    const x0 = 3;
    const span = bottom - top;
    let out = frame(w, 28, h - 44) + drawGrid(w, top, bottom, x0, pitch, x0);

    let pts = '';
    seed = 7;
    for (let x = x0; x < w - 4; x += 0.5) {
        if (x % 1 && rnd() < 0.5) {
            continue;
        }
        let y = top + span * 0.905 - span / 10 * Math.log10(-Math.log(rnd()));
        PEAKS.forEach(([k, level, wide]) => {
            const d = Math.abs(x - Math.round(x0 + k * pitch));
            if (d < 6 * wide) {
                y = Math.min(y, top + span * level + skirt(d / wide));
            }
        });
        y = Math.min(y, bottom);
        pts += `${x + 0.25},${Math.round(y)} `;
    }
    out += `<polyline points="${pts}" fill="none" stroke="#0ff" stroke-linejoin="bevel" shape-rendering="crispEdges"/>`;

    let marks = '';
    for (let k = 0; k < 8; k++) {
        const x = x0 + k * pitch;
        marks += arrow(x, bottom);
        out += k ? `<text x="${x}" y="${bottom + 21}">+${k}K</text>` : `<text x="${x}" y="${bottom + 37}">0K</text>`;
    }
    out += `<path d="${marks}" fill="none" stroke="${LABEL}"/>`;
    svg.innerHTML = out;
}

function drawSpecOverview() {
    const svg = document.getElementById('specOverview');
    const w = svg.clientWidth;
    let out = `<rect x=".5" y=".5" width="${w - 1}" height="33" fill="${PANEL}" stroke="#434a4b"/>`;
    out += `<path d="M10 3h${w - 13}v28H10z" fill="${TEAL}"/>`;
    let d = 'M3 31V5h2v12h1v4h1v4h2V31z';
    for (let x = 7; x < w - 3; x++) {
        const far = x / w;
        const bump = far < 0.15 ? 3 : far < 0.6 ? 1.6 : 0.6;
        d += `M${x} 31h1v-${5 + Math.floor(Math.pow(rnd(), 3) * bump * 1.4)}h-1z`;
    }
    out += `<path d="${d}" fill="#0ff" shape-rendering="crispEdges"/>`;
    svg.innerHTML = out;
}

function draw() {
    document.querySelectorAll('.scale').forEach(drawScale);
    drawWave();
    drawWaveOverview();
    drawSpectrum();
    drawSpecOverview();
}

window.addEventListener('resize', draw);
draw();
```
